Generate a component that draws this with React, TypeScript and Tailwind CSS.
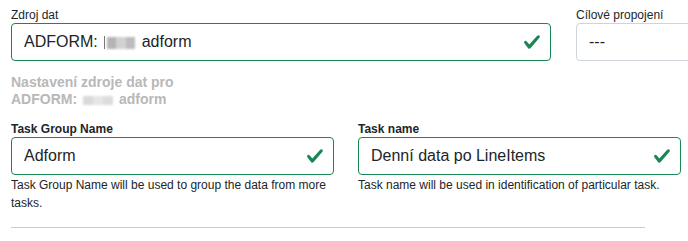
import React from "react";

const Check = () => (
  <svg width="18" height="18" viewBox="0 0 8 8" className="shrink-0">
    <path
      fill="#198754"
      d="M2.3 6.73.6 4.53c-.4-1.04.46-1.4 1.1-.8l1.1 1.4 3.4-3.8c.6-.63 1.6-.27 1.2.7l-4 4.6c-.43.5-.8.4-1.1.1z"
    />
  </svg>
);

const Redacted = ({ big }: { big?: boolean }) =>
  big ? (
    <span className="inline-flex items-center align-middle mx-[2px]">
      <span className="inline-block w-px h-[13px] bg-[#777]" />
      <span className="inline-flex ml-[2px] blur-[1px]">
        <span className="inline-block w-[9px] h-[12px] bg-[#b4b4b4]" />
        <span className="inline-block w-[10px] h-[12px] bg-[#d2d2d2]" />
        <span className="inline-block w-[9px] h-[12px] bg-[#bcbcbc]" />
      </span>
    </span>
  ) : (
    <span className="inline-flex align-middle mx-[2px] blur-[0.8px]">
      <span className="inline-block w-[10px] h-[9px] bg-[#d9d9d9]" />
      <span className="inline-block w-[10px] h-[9px] bg-[#e6e6e6]" />
      <span className="inline-block w-[10px] h-[9px] bg-[#dcdcdc]" />
    </span>
  );

const ValidInput = ({ children }: { children: React.ReactNode }) => (
  <div className="h-[38px] flex items-center justify-between rounded-[4px] border border-[#198754] pl-3 pr-[9px] text-[16px] text-[#212529]">
    <span className="whitespace-nowrap">{children}</span>
    <Check />
  </div>
);

export default function App() {
  return (
    <div
      className="w-[688px] h-[241px] overflow-hidden bg-white pl-[11px] pt-[8px] text-[#212529]"
      style={{ fontFamily: '"Liberation Sans", Arial, sans-serif' }}
    >
      <div className="flex gap-[25px]">
        <div className="w-[540px] shrink-0">
          <div className="text-[12px] leading-[14px] mb-px">Zdroj dat</div>
          <ValidInput>
            ADFORM: <Redacted big /> adform
          </ValidInput>
        </div>
        <div className="w-[200px] shrink-0">
          <div className="text-[12px] leading-[14px] mb-px">Cílové propojení</div>
          <div className="h-[38px] flex items-center rounded-[4px] border border-[#ced4da] pl-3 text-[16px]">
            ---
          </div>
        </div>
      </div>

      <div className="mt-[13px] w-[210px] text-[14px] leading-[17px] font-bold text-[#b8b8b8]">
        Nastavení zdroje dat pro
        <br />
        ADFORM: <Redacted /> adform
      </div>

      <div className="mt-[14px] flex gap-[24px]">
        <div className="w-[323px] shrink-0">
          <div className="text-[12px] leading-[14px] font-bold mb-px">Task Group Name</div>
          <ValidInput>Adform</ValidInput>
          <div className="mt-px text-[12px] leading-[18px]">
            Task Group Name will be used to group the data from more tasks.
          </div>
        </div>
        <div className="w-[323px] shrink-0">
          <div className="text-[12px] leading-[14px] font-bold mb-px">Task name</div>
          <ValidInput>Denní data po LineItems</ValidInput>
          <div className="mt-px text-[12px] leading-[18px]">
            Task name will be used in identification of particular task.
          </div>
        </div>
      </div>

      <div className="mt-[15px] w-[634px] border-t border-[#cccccc]" />
    </div>
  );
}
